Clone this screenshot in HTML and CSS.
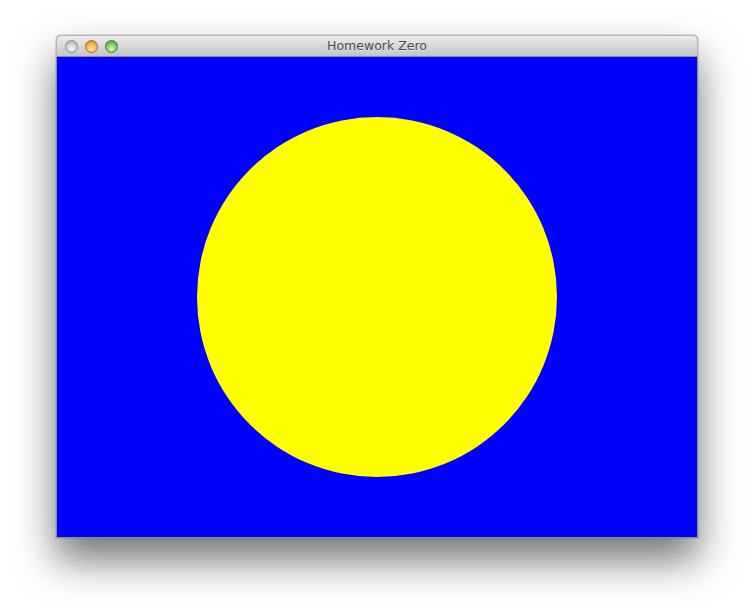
FILE: index.html
```html
<!DOCTYPE html>
<html>
<head>
<meta charset="utf-8">
<link rel="stylesheet" href="styles.css">
</head>
<body>
<div class="window">
  <div class="titlebar">
    <div class="lights">
      <span class="light close"></span>
      <span class="light min"></span>
      <span class="light max"></span>
    </div>
    <div class="title">Homework Zero</div>
  </div>
  <div class="canvas">
    <div class="sun"></div>
  </div>
</div>
</body>
</html>
```
FILE: styles.css
```css
html, body {
  margin: 0;
  padding: 0;
  background: #ffffff;
  width: 754px;
  height: 616px;
  overflow: hidden;
}
body {
  padding: 35px 0 0 56px;
  box-sizing: border-box;
}
.window {
  width: 642px;
  border-radius: 5px 5px 0 0;
  box-shadow: 0 22px 40px rgba(0,0,0,0.55), 0 0 0 1px rgba(0,0,0,0.1);
  background: #8c8c8c;
  padding-bottom: 1px;
}
.titlebar {
  position: relative;
  height: 22px;
  box-sizing: border-box;
  border: 1px solid #b5b5b5;
  border-bottom: 1px solid #8e8e8e;
  border-radius: 5px 5px 0 0;
  background: linear-gradient(#ececec, #d8d8d8 50%, #c4c4c4);
  display: flex;
  align-items: center;
  justify-content: center;
}
.lights {
  position: absolute;
  left: 8px;
  top: 4px;
  display: flex;
  gap: 7px;
}
.light {
  width: 13px;
  height: 13px;
  border-radius: 50%;
  box-sizing: border-box;
  display: block;
}
.close {
  background: radial-gradient(circle at 50% 72%, #f6f6f6, #cdcdcd 55%, #9c9c9c);
  border: 1px solid #8a8a8a;
}
.min {
  background: radial-gradient(circle at 50% 72%, #ffe9aa, #f5b04a 55%, #c97a1a);
  border: 1px solid #a8691c;
}
.max {
  background: radial-gradient(circle at 50% 72%, #d2f6b4, #7ccb55 55%, #3f8c24);
  border: 1px solid #3b7d25;
}
.title {
  font-family: "DejaVu Sans", "Liberation Sans", sans-serif;
  font-size: 12.5px;
  color: #4a4a4a;
  text-shadow: 0 1px 0 rgba(255,255,255,0.5);
  line-height: 20px;
}
.canvas {
  width: 640px;
  height: 480px;
  margin: 0 1px;
  background: #0000ff;
  display: flex;
  align-items: center;
  justify-content: center;
}
.sun {
  width: 360px;
  height: 360px;
  border-radius: 50%;
  background: #ffff00;
}
```
